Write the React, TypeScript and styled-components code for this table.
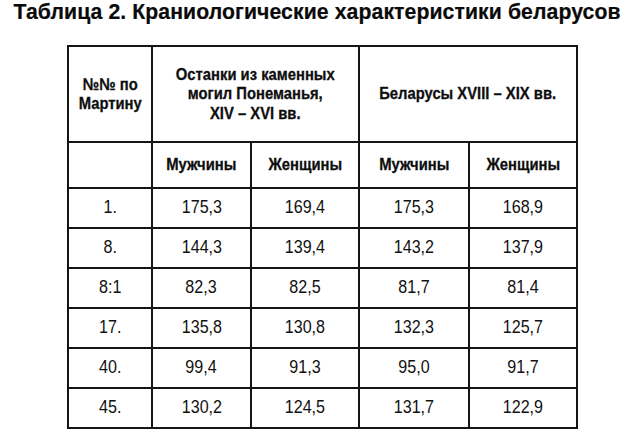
import styled, { createGlobalStyle } from "styled-components";

const GlobalStyle = createGlobalStyle`
  html, body {
    margin: 0;
    padding: 0;
    background: #ffffff;
  }
  body {
    width: 640px;
    height: 438px;
    overflow: hidden;
    color: #111111;
    font-family: "Liberation Sans", Arial, sans-serif;
  }
`;

const groups = [
  { title: ["Останки из каменных", "могил Понеманья,", "XIV – XVI вв."] },
  { title: ["Беларусы XVIII – XIX вв."] },
];

const rows = [
  ["1.", "175,3", "169,4", "175,3", "168,9"],
  ["8.", "144,3", "139,4", "143,2", "137,9"],
  ["8:1", "82,3", "82,5", "81,7", "81,4"],
  ["17.", "135,8", "130,8", "132,3", "125,7"],
  ["40.", "99,4", "91,3", "95,0", "91,7"],
  ["45.", "130,2", "124,5", "131,7", "122,9"],
];

const colWidths = [84, 99, 108, 110, 108];

export default function App() {
  return (
    <>
      <GlobalStyle />
      <Page>
        <Title>Таблица 2. Краниологические характеристики беларусов</Title>
        <Table>
          <colgroup>
            {colWidths.map((w, i) => (
              <col key={i} style={{ width: w }} />
            ))}
          </colgroup>
          <thead>
            <HeadRow>
              <HeadCell>
                <Condensed>
                  №№ по
                  <br />
                  Мартину
                </Condensed>
              </HeadCell>
              {groups.map((g, i) => (
                <HeadCell key={i} colSpan={2}>
                  <Condensed>
                    {g.title.map((line, j) => (
                      <span key={j}>
                        {j > 0 && <br />}
                        {line}
                      </span>
                    ))}
                  </Condensed>
                </HeadCell>
              ))}
            </HeadRow>
            <SubRow>
              <HeadCell />
              {["Мужчины", "Женщины", "Мужчины", "Женщины"].map((s, i) => (
                <HeadCell key={i}>
                  <Condensed>{s}</Condensed>
                </HeadCell>
              ))}
            </SubRow>
          </thead>
          <tbody>
            {rows.map((r, i) => (
              <DataRow key={i}>
                {r.map((v, j) => (
                  <DataCell key={j}>
                    <Narrow>{v}</Narrow>
                  </DataCell>
                ))}
              </DataRow>
            ))}
          </tbody>
        </Table>
      </Page>
    </>
  );
}

const Page = styled.div`
  display: flex;
  flex-direction: column;
  align-items: center;
`;

const Title = styled.h1`
  margin: 0 6px 0 0;
  font-family: "Liberation Sans", Arial, sans-serif;
  font-weight: bold;
  font-size: 21.2px;
  line-height: 24px;
  letter-spacing: 0.1px;
  color: #0a0a0a;
  white-space: nowrap;
  -webkit-text-stroke: 0.2px #0a0a0a;
`;

const Table = styled.table`
  margin-top: 21px;
  margin-left: 5px;
  border-collapse: collapse;
  table-layout: fixed;
  width: 509px;
  font-family: "Liberation Sans", Arial, sans-serif;
`;

const HeadRow = styled.tr`
  height: 96px;
`;

const SubRow = styled.tr`
  height: 46px;
`;

const DataRow = styled.tr`
  height: 40px;
`;

const HeadCell = styled.th`
  border: 2px solid #151515;
  padding: 0;
  font-weight: bold;
  font-size: 17px;
  line-height: 19.5px;
  text-align: center;
  vertical-align: middle;
  color: #0e0e0e;
  white-space: nowrap;
`;

const Condensed = styled.span`
  display: inline-block;
  transform: scaleX(0.87);
  -webkit-text-stroke: 0.3px #0e0e0e;
`;

const DataCell = styled.td`
  border: 2px solid #151515;
  padding: 0 0 1px;
  font-size: 17.5px;
  text-align: center;
  vertical-align: middle;
  color: #111111;
`;

const Narrow = styled.span`
  display: inline-block;
  transform: scaleX(0.92);
`;
